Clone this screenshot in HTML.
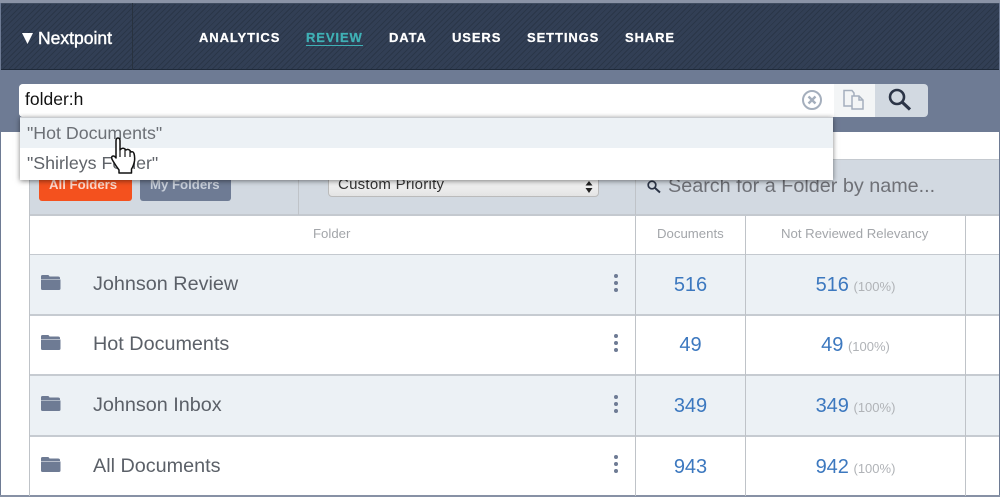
<!DOCTYPE html>
<html><head><meta charset="utf-8">
<style>
html,body{margin:0;padding:0}
body{width:1000px;height:497px;position:relative;overflow:hidden;background:#fff;font-family:"Liberation Sans",Arial,sans-serif}
.a{position:absolute}
.t{position:absolute;white-space:nowrap}
.nav{position:absolute;top:0;left:1px;width:998px;height:70px;box-sizing:border-box;border-top:1px solid #3f4c60;border-bottom:1px solid #1f2a3a;background-color:#323f55;background-image:repeating-linear-gradient(135deg,#323f55 0,#323f55 3px,#2a3648 3px,#2a3648 4px)}
.n{position:absolute;top:30px;font-size:13px;line-height:16px;font-weight:bold;color:#fff;letter-spacing:.9px;white-space:nowrap;-webkit-text-stroke:.25px #fff}
.row{position:absolute;left:30px;width:969px;box-sizing:border-box;border-bottom:2px solid #c6cbd1}
.nm{position:absolute;left:93px;font-size:19.800px;line-height:22px;color:#5b6068;white-space:nowrap}
.num{position:absolute;font-size:20px;line-height:22px;color:#3c78bf;text-align:center;white-space:nowrap}
.pct{font-size:13px;color:#b0b3b7;margin-left:-1px}
.v{position:absolute;width:1px;background:#bfc3c8}
.h{position:absolute;top:226px;font-size:13.200px;line-height:15px;color:#a3a6aa;white-space:nowrap}
</style></head>
<body>
<div class="a" style="left:0;top:0;width:1000px;height:497px;background:#fff"></div>
<div class="a" style="left:0;top:0;width:1px;height:497px;background:#6e7b94"></div>
<div class="a" style="left:999px;top:0;width:1px;height:497px;background:#6e7b94"></div>
<div class="a" style="left:0;top:0;width:1000px;height:3px;background:#8a93a6"></div>
<div class="a" style="left:1px;top:70px;width:998px;height:62px;background:#6e7b94"></div>
<div class="nav" style="top:3px;height:67px"></div>
<div class="a" style="left:132px;top:3px;width:1px;height:67px;background:#28323f"></div>

<svg class="a" style="left:21px;top:32px" width="13" height="13"><path d="M1 1H12L6.500 12Z" fill="#fff"/></svg>
<div class="t" style="left:38px;top:28px;font-size:17.500px;line-height:20px;color:#fff;-webkit-text-stroke:.45px #fff">Nextpoint</div>
<div class="n" style="left:199px">ANALYTICS</div>
<div class="n" style="left:306px;color:#3fb0b5;-webkit-text-stroke:.25px #3fb0b5;border-bottom:1px solid #3fb0b5;line-height:15px">REVIEW</div>
<div class="n" style="left:389px">DATA</div>
<div class="n" style="left:452px">USERS</div>
<div class="n" style="left:527px">SETTINGS</div>
<div class="n" style="left:625px">SHARE</div>

<!-- panel header -->
<div class="a" style="left:29px;top:159px;width:970px;height:57px;background:#d2d9e1;border-top:1px solid #c4c9cf;border-bottom:2px solid #c4c9cf;box-sizing:border-box"></div>
<div class="a" style="left:39px;top:170px;width:93px;height:31px;background:#f4511e;border-radius:3px"></div>
<div class="t" style="left:49px;top:177px;font-size:13.200px;line-height:15px;font-weight:bold;color:#ffd9cc">All Folders</div>
<div class="a" style="left:140px;top:170px;width:91px;height:31px;background:#6e7b94;border-radius:3px"></div>
<div class="t" style="left:150px;top:177px;font-size:13.200px;line-height:15px;font-weight:bold;color:#c9d0db">My Folders</div>
<div class="v" style="left:298px;top:160px;height:55px"></div>
<div class="a" style="left:328px;top:170px;width:271px;height:27px;box-sizing:border-box;background:linear-gradient(#fff,#e4e4e4);border:1px solid #bbb;border-radius:4px"></div>
<div class="t" style="left:338px;top:176px;font-size:15px;line-height:18px;color:#333;letter-spacing:.25px">Custom Priority</div>
<svg class="a" style="left:584px;top:180px" width="10" height="14"><path d="M5 1L8.500 5.500H1.500ZM5 13L8.500 8H1.500Z" fill="#222"/></svg>
<div class="v" style="left:635px;top:160px;height:55px"></div>
<svg class="a" style="left:646px;top:179px" width="16" height="15"><circle cx="6" cy="6" r="3.800" fill="none" stroke="#2c3547" stroke-width="1.700"/><path d="M9 9L14 13.500" stroke="#2c3547" stroke-width="2"/></svg>
<div class="t" style="left:668px;top:175px;font-size:19.800px;line-height:22px;color:#6f7177">Search for a Folder by name...</div>

<!-- column header -->
<div class="a" style="left:30px;top:216px;width:969px;height:38px;border-bottom:2px solid #c4c9cf;box-sizing:content-box;background:#fff"></div>
<div class="h" style="left:313px">Folder</div>
<div class="h" style="left:657px">Documents</div>
<div class="h" style="left:781px">Not Reviewed Relevancy</div>

<!-- rows -->
<div class="row" style="top:255px;height:61px;background:#ecf1f5"></div>
<div class="row" style="top:316px;height:60px;background:#fff"></div>
<div class="row" style="top:376px;height:61px;background:#ecf1f5"></div>
<div class="row" style="top:437px;height:60px;background:#fff;border-bottom:0"></div>
<div class="a" style="left:0;top:495px;width:1000px;height:2px;background:#8791a5"></div>

<div class="v" style="left:29px;top:159px;height:337px"></div>
<div class="v" style="left:635px;top:216px;height:280px"></div>
<div class="v" style="left:745px;top:216px;height:280px"></div>
<div class="v" style="left:965px;top:216px;height:280px"></div>

<svg class="a" style="left:40px;top:273px" width="22" height="19"><path d="M1 5V3.500Q1 2 2.500 2H8Q9 2 9.500 3.500H18Q20 3.500 20 5V6H1ZM1 6.500H20.500V15.500Q20.500 17 19 17H2.500Q1 17 1 15.500Z" fill="#6e7b94"/></svg>
<svg class="a" style="left:40px;top:333px" width="22" height="19"><path d="M1 5V3.500Q1 2 2.500 2H8Q9 2 9.500 3.500H18Q20 3.500 20 5V6H1ZM1 6.500H20.500V15.500Q20.500 17 19 17H2.500Q1 17 1 15.500Z" fill="#6e7b94"/></svg>
<svg class="a" style="left:40px;top:394px" width="22" height="19"><path d="M1 5V3.500Q1 2 2.500 2H8Q9 2 9.500 3.500H18Q20 3.500 20 5V6H1ZM1 6.500H20.500V15.500Q20.500 17 19 17H2.500Q1 17 1 15.500Z" fill="#6e7b94"/></svg>
<svg class="a" style="left:40px;top:455px" width="22" height="19"><path d="M1 5V3.500Q1 2 2.500 2H8Q9 2 9.500 3.500H18Q20 3.500 20 5V6H1ZM1 6.500H20.500V15.500Q20.500 17 19 17H2.500Q1 17 1 15.500Z" fill="#6e7b94"/></svg>

<div class="nm" style="top:273px">Johnson Review</div>
<div class="nm" style="top:333px">Hot Documents</div>
<div class="nm" style="top:394px">Johnson Inbox</div>
<div class="nm" style="top:455px">All Documents</div>

<svg class="a" style="left:612px;top:273px" width="8" height="20" fill="#6e7b94"><circle cx="4" cy="3" r="2"/><circle cx="4" cy="10" r="2"/><circle cx="4" cy="17" r="2"/></svg>
<svg class="a" style="left:612px;top:333px" width="8" height="20" fill="#6e7b94"><circle cx="4" cy="3" r="2"/><circle cx="4" cy="10" r="2"/><circle cx="4" cy="17" r="2"/></svg>
<svg class="a" style="left:612px;top:394px" width="8" height="20" fill="#6e7b94"><circle cx="4" cy="3" r="2"/><circle cx="4" cy="10" r="2"/><circle cx="4" cy="17" r="2"/></svg>
<svg class="a" style="left:612px;top:454px" width="8" height="20" fill="#6e7b94"><circle cx="4" cy="3" r="2"/><circle cx="4" cy="10" r="2"/><circle cx="4" cy="17" r="2"/></svg>

<div class="num" style="left:636px;width:109px;top:274px">516</div>
<div class="num" style="left:636px;width:109px;top:334px">49</div>
<div class="num" style="left:636px;width:109px;top:395px">349</div>
<div class="num" style="left:636px;width:109px;top:456px">943</div>
<div class="num" style="left:746px;width:219px;top:274px">516 <span class="pct">(100%)</span></div>
<div class="num" style="left:746px;width:219px;top:334px">49 <span class="pct">(100%)</span></div>
<div class="num" style="left:746px;width:219px;top:395px">349 <span class="pct">(100%)</span></div>
<div class="num" style="left:746px;width:219px;top:456px">942 <span class="pct">(100%)</span></div>

<!-- search bar -->
<div class="a" style="left:19px;top:84px;width:909px;height:33px;background:#d2d9e1;border-radius:4px"></div>
<div class="a" style="left:19px;top:84px;width:815px;height:33px;background:#fff;border-radius:4px 0 0 4px"></div>
<div class="a" style="left:834px;top:84px;width:41px;height:33px;background:#f3f5f6"></div>
<div class="t" style="left:25px;top:89px;font-size:17.500px;line-height:21px;color:#111">folder:h</div>
<svg class="a" style="left:801px;top:89px" width="22" height="22"><circle cx="11" cy="11" r="9" fill="none" stroke="#a5afbd" stroke-width="2"/><path d="M7.500 7.500L14.500 14.500M14.500 7.500L7.500 14.500" stroke="#a5afbd" stroke-width="2.400"/></svg>
<svg class="a" style="left:842px;top:88px" width="24" height="24" fill="none" stroke="#a5afbd" stroke-width="1.500"><path d="M2 2.500H10L12 5V18H2Z" fill="#f3f5f6"/><path d="M10 8H17L21 12V21H10Z" fill="#f3f5f6"/><path d="M17 8V12H21"/></svg>
<svg class="a" style="left:886px;top:87px" width="26" height="25" fill="none" stroke="#2c3547"><circle cx="11" cy="10" r="7" stroke-width="2.600"/><path d="M16 15L24 22.500" stroke-width="3.200"/></svg>

<!-- dropdown -->
<div class="a" style="left:20px;top:117px;width:813px;height:62px;background:#fff;border-top:1px solid #c9ccd0;box-shadow:0 1px 5px rgba(0,0,0,.5)"></div>
<div class="a" style="left:20px;top:118px;width:813px;height:30px;background:#ecf1f5"></div>
<div class="t" style="left:27px;top:123px;font-size:17.800px;line-height:21px;color:#6c7076">"Hot Documents"</div>
<div class="t" style="left:27px;top:153px;font-size:17.800px;line-height:21px;color:#5f6369">"Shirleys Folder"</div>

<!-- hand cursor -->
<svg class="a" style="left:108px;top:136px" width="32" height="40"><path d="M8 18V5Q8 2 10 2T12 5V14L13 13Q15 11.500 17 13L18 14Q20 12.500 22 14.500L23 16Q25 15 26 17.500Q27 21 26.500 25Q25.500 30 23.500 33V37H11V34Q8 30 5 25Q3 22 4 20.500Q6 19 8 22Z" fill="#fff" stroke="#111" stroke-width="1.500" stroke-linejoin="round"/><path d="M12 14V21M17 13V21M22 15V21" stroke="#111" stroke-width="1.200" fill="none"/></svg>
</body></html>
